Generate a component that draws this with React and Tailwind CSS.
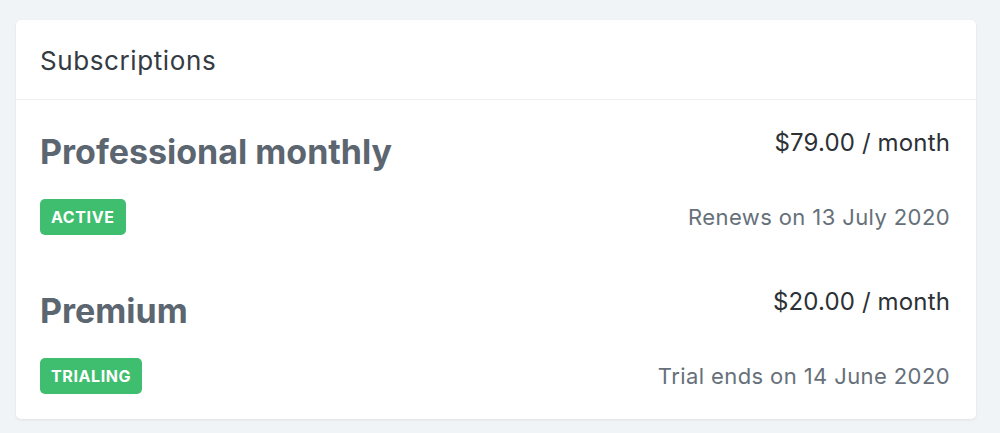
const subscriptions = [
  {
    name: "Professional monthly",
    price: "$79.00 / month",
    status: "Active",
    note: "Renews on 13 July 2020",
  },
  {
    name: "Premium",
    price: "$20.00 / month",
    status: "Trialing",
    note: "Trial ends on 14 June 2020",
  },
];

const SubscriptionRow = ({ sub }) => (
  <div>
    {/* Name + price */}
    <div className="flex items-start justify-between">
      <h3 className="mt-[5px] text-[34px] leading-[40px] font-bold text-[#5b6670]">
        {sub.name}
      </h3>
      <div className="text-[24px] leading-[32px] tracking-[0.15px] text-[#2c3136]">
        {sub.price}
      </div>
    </div>

    {/* Status + note */}
    <div className="mt-[27px] flex items-center justify-between">
      <span className="flex h-[36px] items-center rounded-[5px] bg-[#3fbe6f] px-[11px] text-[16px] font-bold uppercase tracking-[0.6px] text-white">
        {sub.status}
      </span>
      <span className="text-[22px] leading-[30px] tracking-[0.4px] text-[#66707a]">
        {sub.note}
      </span>
    </div>
  </div>
);

export default function App() {
  return (
    <div
      className="min-h-screen bg-[#f1f4f7] pt-[20px] pr-[24px] pb-[15px] pl-[16px]"
      style={{ fontFamily: "Inter, 'Noto Sans', sans-serif" }}
    >
      <div className="rounded-[5px] bg-white shadow-[0_1px_3px_rgba(0,0,0,0.08)]">
        {/* Header */}
        <div className="border-b border-[#eef1f4] px-[24px] pt-[25px] pb-[22px]">
          <h2 className="text-[26px] leading-[32px] tracking-[0.6px] text-[#353b42]">
            Subscriptions
          </h2>
        </div>

        {/* Body */}
        <div className="space-y-[51px] pt-[27px] pr-[26px] pb-[25px] pl-[24px]">
          {subscriptions.map((sub) => (
            <SubscriptionRow key={sub.name} sub={sub} />
          ))}
        </div>
      </div>
    </div>
  );
}
